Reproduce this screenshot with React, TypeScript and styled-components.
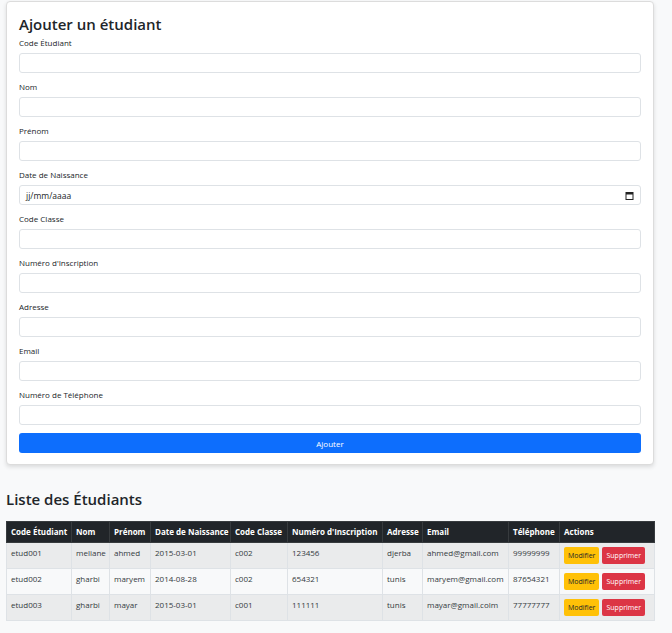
import React from "react";
import styled, { createGlobalStyle } from "styled-components";

const GlobalStyle = createGlobalStyle`
  html, body { margin: 0; padding: 0; background: #f8f9fa; }
  body { font-family: "Open Sans", "Noto Sans", sans-serif; color: #212529; }
  * { box-sizing: border-box; }
`;

const Page = styled.div`
  padding: 1px 18px 14px 6px;
`;

const Card = styled.form`
  background: #fff;
  border: 1px solid #dcdcdc;
  border-radius: 4px;
  box-shadow: 0 2px 4px rgba(0, 0, 0, 0.12);
  padding: 12px 12px 11px 12px;
  display: flex;
  flex-direction: column;
`;

const Title = styled.h2`
  margin: 0 0 2px 0;
  font-size: 15px;
  font-weight: 600;
  line-height: 21px;
  color: #212529;
`;

const Group = styled.div`
  display: flex;
  flex-direction: column;
  margin-bottom: 8px;
`;

const Label = styled.label`
  font-size: 8px;
  line-height: 12px;
  margin-bottom: 4px;
  color: #212529;
`;

const Input = styled.input`
  height: 20px;
  width: 100%;
  border: 1px solid #dee2e6;
  border-radius: 3px;
  background: #fff;
  padding: 0 6px;
  font-family: inherit;
  font-size: 8px;
  outline: none;
`;

const DateBox = styled.div`
  height: 20px;
  border: 1px solid #dee2e6;
  border-radius: 3px;
  background: #fff;
  padding: 0 6px;
  display: flex;
  align-items: center;
  justify-content: space-between;
`;

const DateText = styled.span`
  font-size: 8.5px;
  color: #212529;
`;

const SubmitButton = styled.button`
  height: 20px;
  width: 100%;
  border: none;
  border-radius: 3px;
  background: #0d6efd;
  color: #fff;
  font-family: inherit;
  font-size: 8px;
  cursor: pointer;
`;

const SectionTitle = styled.h2`
  margin: 24px 0 11px 0;
  font-size: 15px;
  font-weight: 600;
  line-height: 21px;
  color: #212529;
`;

const Table = styled.table`
  width: 648px;
  border-collapse: collapse;
  table-layout: fixed;
  font-size: 8px;
  line-height: 12px;
`;

const Th = styled.th`
  background: #212529;
  color: #fff;
  font-weight: 700;
  text-align: left;
  padding: 4px 4px;
  border: 1px solid #373b3e;
  white-space: nowrap;
  overflow: hidden;
`;

const Tr = styled.tr<{ $striped: boolean }>`
  background: ${(p) => (p.$striped ? "#eaebec" : "#f8f9fa")};
`;

const Td = styled.td`
  padding: 4px 4px 9px 4px;
  border: 1px solid #dee2e6;
  color: #343a40;
  vertical-align: top;
  white-space: nowrap;
  overflow: hidden;
`;

const ActionTd = styled(Td)`
  padding: 4px 4px 3px 4px;
`;

const Actions = styled.div`
  display: flex;
  gap: 3px;
`;

const SmallButton = styled.button<{ $variant: "warning" | "danger" }>`
  height: 17px;
  padding: 0 4px;
  border: none;
  border-radius: 2px;
  font-family: inherit;
  font-size: 7px;
  background: ${(p) => (p.$variant === "warning" ? "#ffc107" : "#dc3545")};
  color: ${(p) => (p.$variant === "warning" ? "#212529" : "#fff")};
`;

const CalendarIcon = () => (
  <svg width="9" height="9" viewBox="0 0 9 9">
    <rect x="1" y="1.5" width="7" height="7" fill="none" stroke="#222" strokeWidth="1" />
    <rect x="1" y="1.5" width="7" height="2" fill="#222" />
  </svg>
);

const fields = [
  "Code Étudiant",
  "Nom",
  "Prénom",
  "Date de Naissance",
  "Code Classe",
  "Numéro d'Inscription",
  "Adresse",
  "Email",
  "Numéro de Téléphone",
];

const columns: [string, number][] = [
  ["Code Étudiant", 65],
  ["Nom", 38],
  ["Prénom", 41],
  ["Date de Naissance", 80],
  ["Code Classe", 57],
  ["Numéro d'Inscription", 95],
  ["Adresse", 40],
  ["Email", 86],
  ["Téléphone", 51],
  ["Actions", 95],
];

const students = [
  ["etud001", "meliane", "ahmed", "2015-03-01", "c002", "123456", "djerba", "ahmed@gmail.com", "99999999"],
  ["etud002", "gharbi", "maryem", "2014-08-28", "c002", "654321", "tunis", "maryem@gmail.com", "87654321"],
  ["etud003", "gharbi", "mayar", "2015-03-01", "c001", "111111", "tunis", "mayar@gmail.colm", "77777777"],
];

export default function App() {
  return (
    <>
      <GlobalStyle />
      <Page>
        <Card onSubmit={(e) => e.preventDefault()}>
          <Title>Ajouter un étudiant</Title>
          {fields.map((f) => (
            <Group key={f}>
              <Label>{f}</Label>
              {f === "Date de Naissance" ? (
                <DateBox>
                  <DateText>jj/mm/aaaa</DateText>
                  <CalendarIcon />
                </DateBox>
              ) : (
                <Input type="text" />
              )}
            </Group>
          ))}
          <SubmitButton type="submit">Ajouter</SubmitButton>
        </Card>
        <SectionTitle>Liste des Étudiants</SectionTitle>
        <Table>
          <colgroup>
            {columns.map(([c, w]) => (
              <col key={c} style={{ width: w }} />
            ))}
          </colgroup>
          <thead>
            <tr>
              {columns.map(([c]) => (
                <Th key={c}>{c}</Th>
              ))}
            </tr>
          </thead>
          <tbody>
            {students.map((s, i) => (
              <Tr key={s[0]} $striped={i % 2 === 0}>
                {s.map((v, j) => (
                  <Td key={j}>{v}</Td>
                ))}
                <ActionTd>
                  <Actions>
                    <SmallButton $variant="warning">Modifier</SmallButton>
                    <SmallButton $variant="danger">Supprimer</SmallButton>
                  </Actions>
                </ActionTd>
              </Tr>
            ))}
          </tbody>
        </Table>
      </Page>
    </>
  );
}
